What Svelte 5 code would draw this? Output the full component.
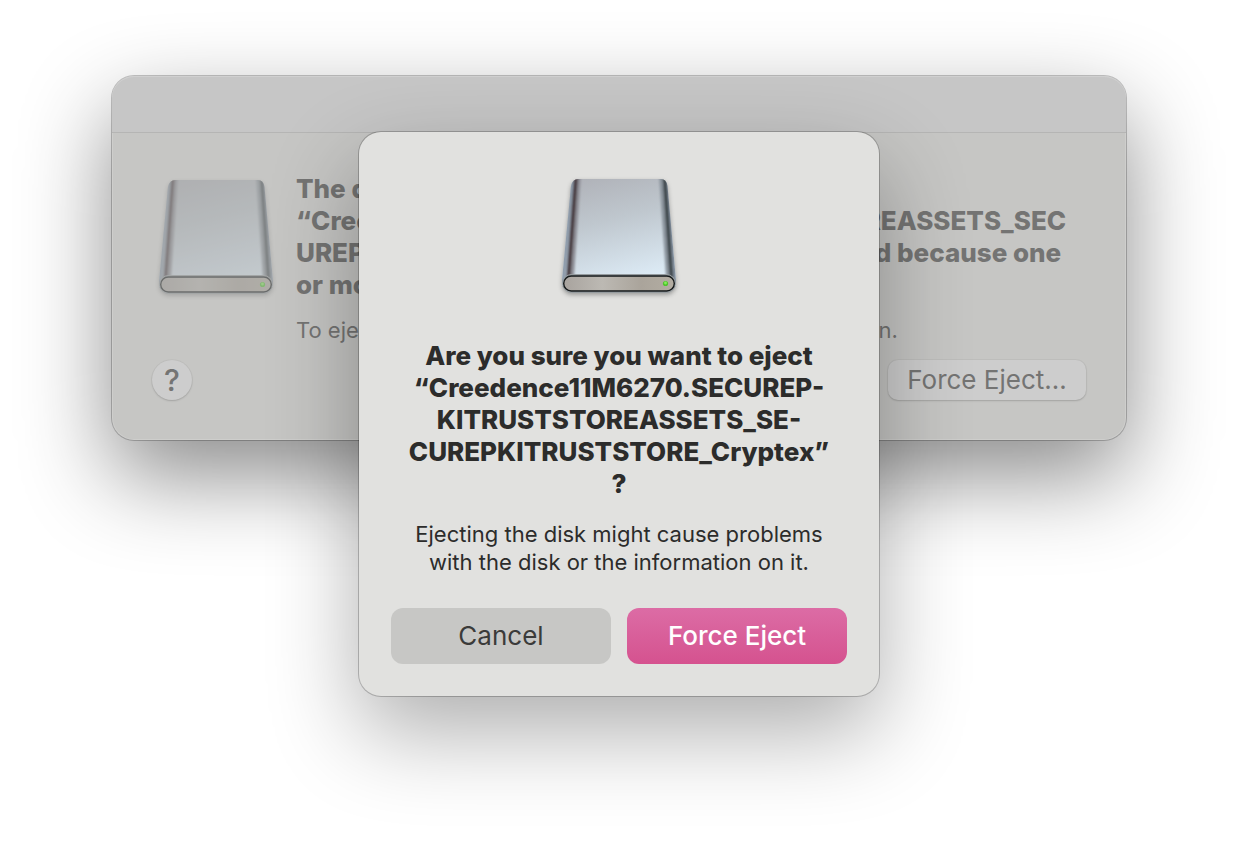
<script>
  let {
    volume = 'Creedence11M6270.SECUREPKITRUSTSTOREASSETS_SECUREPKITRUSTSTORE_Cryptex'
  } = $props();
</script>

{#snippet drive(id, faded)}
  <svg class="drive" class:faded viewBox="0 0 128 128" aria-hidden="true">
    <defs>
      <linearGradient id="{id}-top" x1="0" y1="0" x2=".25" y2="1">
        <stop offset="0" stop-color="#acadb3" />
        <stop offset=".45" stop-color="#bfc7ce" />
        <stop offset="1" stop-color="#e0effa" />
      </linearGradient>
      <linearGradient id="{id}-front">
        <stop offset="0" stop-color="#a8a39e" />
        <stop offset=".35" stop-color="#bcb9b3" />
        <stop offset=".7" stop-color="#aaa49b" />
        <stop offset="1" stop-color="#b3ada2" />
      </linearGradient>
      <clipPath id="{id}-clip">
        <path d="M23 7H106Q111.500 7 112.500 14L121 108V114H7V108L16 14Q17.500 7 23 7Z" />
      </clipPath>
      <filter id="{id}-soft">
        <feGaussianBlur stdDeviation=".8" />
      </filter>
    </defs>
    <g clip-path="url(#{id}-clip)">
      <path d="M0 0H128V128H0Z" fill="url(#{id}-top)" />
      <g fill="none" filter="url(#{id}-soft)">
        <path d="M16 8L7.500 112" stroke="#909dac" stroke-width="6" />
        <path d="M23.500 4L16 112" stroke="#8f9098" stroke-width="5" />
        <path d="M21 4L13 112" stroke="#4a3e42" stroke-width="4" />
        <path d="M113 8L121.500 112" stroke="#8894a3" stroke-width="5" />
        <path d="M106.500 4L114 112" stroke="#8c959e" stroke-width="5" />
        <path d="M109.500 4L117 112" stroke="#41484e" stroke-width="4" />
      </g>
    </g>
    <rect x="7.500" y="102.500" width="113" height="18" rx="9" fill="#aab3b9" stroke="#969c9f" />
    <rect x="8.700" y="104" width="110.600" height="15" rx="7.500" fill="url(#{id}-front)" stroke="#15191a" stroke-width="1.400" />
    <circle cx="110.500" cy="111.500" r="2.600" fill="#4fc42c" />
    <circle cx="110.500" cy="111" r="1.400" fill="#82ed58" />
  </svg>
{/snippet}

<main>
  <section class="window">
    <header class="titlebar"></header>
    <div class="content">
      {@render drive('alert', true)}
      <div class="message">
        <h2>
          The disk<br />
          “{volume.slice(0, 46)}<br />
          {volume.slice(46)}” wasn’t ejected because one<br />
          or more programs may be using it.
        </h2>
        <p>To eject the disk immediately, click the Force Eject button.</p>
      </div>
    </div>
    <footer>
      <button class="help" type="button" aria-label="Help">?</button>
      <button class="push" type="button">Force Eject…</button>
    </footer>
  </section>

  <div class="sheet" role="alertdialog" aria-modal="true" aria-labelledby="sheet-title" aria-describedby="sheet-text">
    {@render drive('sheet', false)}
    <h1 id="sheet-title">
      Are you sure you want to eject<br />
      “{volume.slice(0, 24)}-<br />
      {volume.slice(24, 45)}-<br />
      {volume.slice(45)}”<br />
      ?
    </h1>
    <p id="sheet-text">Ejecting the disk might cause problems<br />with the disk or the information on it.</p>
    <div class="actions">
      <button type="button">Cancel</button>
      <button class="primary" type="button">Force Eject</button>
    </div>
  </div>
</main>

<style>
  :global(body) {
    background: #fff;
  }

  /* window and sheet share one grid cell, the sheet hangs below the title bar */
  main {
    display: grid;
    align-items: start;
    box-sizing: border-box;
    min-height: 100vh;
    padding: 76px 112px;
    overflow: hidden;
    font-family: Inter, "Liberation Sans", sans-serif;
    color: #2c2c2b;
  }

  h1,
  h2,
  p {
    margin: 0;
  }

  h1,
  h2 {
    font-size: 26px;
    font-weight: 800;
    line-height: 32px;
    white-space: nowrap;
  }

  p {
    font-size: 22px;
    line-height: 28px;
  }

  button {
    padding: 0;
    border: 0;
    font-family: inherit;
    font-size: 26px;
    line-height: 32px;
    color: #3b3b3a;
  }

  .window,
  .sheet {
    grid-area: 1 / 1;
    border-radius: 22px;
  }

  .window {
    min-width: 0;
    background: #c6c6c4;
    color: #747473;
    box-shadow:
      0 0 0 1px rgba(0, 0, 0, 0.22),
      inset 0 0 0 1px rgba(255, 255, 255, 0.15),
      0 36px 90px rgba(0, 0, 0, 0.46);
  }

  .titlebar {
    height: 56px;
    border-bottom: 1px solid #b5b5b4;
    border-radius: 22px 22px 0 0;
    background: #c6c6c6;
    box-shadow: inset 0 1px 0 #d0d0d0;
  }

  .content {
    display: flex;
    gap: 16px;
    padding: 40px 40px 0;
  }

  .message {
    display: grid;
    gap: 15px;
  }

  .drive {
    flex: none;
    width: 128px;
    height: 128px;
    filter: drop-shadow(0 2px 2px rgba(0, 0, 0, 0.3));
  }

  .drive.faded {
    opacity: 0.5;
    filter: brightness(0.87) drop-shadow(0 2px 2px rgba(0, 0, 0, 0.3));
  }

  footer {
    display: flex;
    justify-content: space-between;
    padding: 16px 40px 40px;
  }

  .help,
  .push {
    height: 40px;
    background: #cdcdcd;
    color: #747473;
    box-shadow:
      0 0 0 1px rgba(0, 0, 0, 0.03),
      0 1px 2px rgba(0, 0, 0, 0.15);
  }

  .help {
    width: 40px;
    border-radius: 50%;
    font-size: 30px;
    font-weight: 500;
  }

  .push {
    width: 198px;
    border-radius: 10px;
  }

  .sheet {
    display: flex;
    flex-direction: column;
    align-items: center;
    justify-self: center;
    box-sizing: border-box;
    width: 520px;
    margin-top: 56px;
    padding: 40px 32px 32px;
    background: #e1e1df;
    color: #2c2c2b;
    text-align: center;
    box-shadow:
      0 0 0 1px rgba(0, 0, 0, 0.22),
      0 36px 90px rgba(0, 0, 0, 0.32);
  }

  .sheet h1 {
    margin: 40px 0 20px;
  }

  .actions {
    display: grid;
    grid-template-columns: 1fr 1fr;
    gap: 16px;
    align-self: stretch;
    margin-top: 32px;
  }

  .actions button {
    height: 56px;
    border-radius: 12px;
    background: #c7c7c5;
  }

  .actions .primary {
    background: linear-gradient(#dc6ca5, #d5528f);
    color: #fff;
    font-weight: 500;
  }
</style>
